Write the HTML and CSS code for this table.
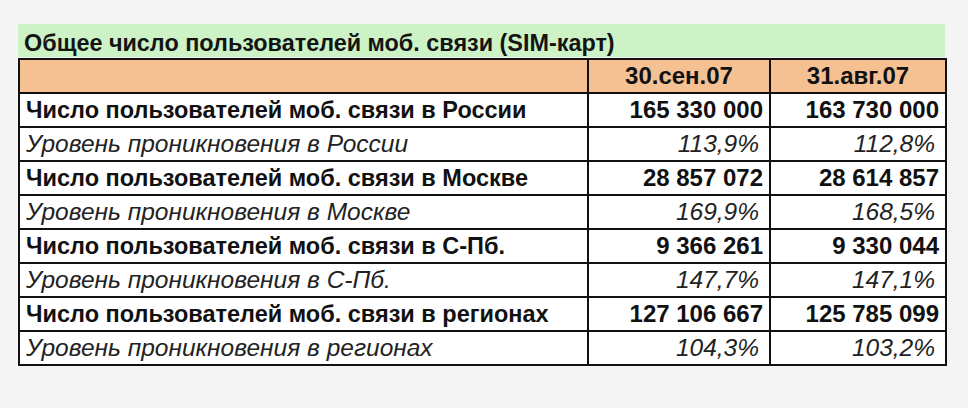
FILE: index.html
```html
<!DOCTYPE html>
<html lang="ru">
<head>
<meta charset="utf-8">
<link rel="stylesheet" href="styles.css">
</head>
<body>
<div class="sheet">
  <div class="title">Общее число пользователей моб. связи (SIM-карт)</div>
  <table class="data">
    <colgroup>
      <col class="c-label">
      <col class="c-num">
      <col class="c-num2">
    </colgroup>
    <tr class="head">
      <td></td>
      <td class="date">30.сен.07</td>
      <td class="date">31.авг.07</td>
    </tr>
    <tr class="total">
      <td class="label">Число пользователей моб. связи в России</td>
      <td class="num">165 330 000</td>
      <td class="num">163 730 000</td>
    </tr>
    <tr class="rate">
      <td class="label">Уровень проникновения в России</td>
      <td class="num">113,9%</td>
      <td class="num">112,8%</td>
    </tr>
    <tr class="total">
      <td class="label">Число пользователей моб. связи в Москве</td>
      <td class="num">28 857 072</td>
      <td class="num">28 614 857</td>
    </tr>
    <tr class="rate">
      <td class="label">Уровень проникновения в Москве</td>
      <td class="num">169,9%</td>
      <td class="num">168,5%</td>
    </tr>
    <tr class="total">
      <td class="label">Число пользователей моб. связи в С-Пб.</td>
      <td class="num">9 366 261</td>
      <td class="num">9 330 044</td>
    </tr>
    <tr class="rate">
      <td class="label">Уровень проникновения в С-Пб.</td>
      <td class="num">147,7%</td>
      <td class="num">147,1%</td>
    </tr>
    <tr class="total">
      <td class="label">Число пользователей моб. связи в регионах</td>
      <td class="num">127 106 667</td>
      <td class="num">125 785 099</td>
    </tr>
    <tr class="rate">
      <td class="label">Уровень проникновения в регионах</td>
      <td class="num">104,3%</td>
      <td class="num">103,2%</td>
    </tr>
  </table>
</div>
</body>
</html>
```

FILE: styles.css
```css
html, body {
  margin: 0;
  padding: 0;
  background: #f4f4f4;
}

body {
  width: 968px;
  height: 408px;
  overflow: hidden;
  font-family: "Liberation Sans", Arial, sans-serif;
  color: #111;
}

.sheet {
  padding: 24px 0 0 18px;
  width: 927px;
}

.title {
  height: 33px;
  background: #cdf2c6;
  font-weight: bold;
  font-size: 23.4px;
  line-height: 38px;
  padding-left: 6px;
  box-sizing: border-box;
  color: #141414;
  white-space: nowrap;
}

.data {
  border-collapse: collapse;
  width: 927px;
  table-layout: fixed;
  margin-top: 1px;
}

.c-label { width: 569px; }
.c-num { width: 182px; }
.c-num2 { width: 176px; }

.data td {
  border: 2px solid #111;
  height: 34px;
  padding: 0 6px;
  box-sizing: border-box;
  background: #fff;
  white-space: nowrap;
  line-height: 32px;
}

.head td {
  background: #f5c193;
}

.date {
  text-align: center;
  font-weight: bold;
  font-size: 24px;
}

.label {
  padding-left: 5px;
}

.total td {
  font-weight: bold;
  font-size: 23.5px;
}

.total td.num {
  font-size: 24px;
}

.rate td {
  font-style: italic;
  font-size: 24.5px;
  color: #222;
}

.rate td.num {
  padding-right: 10px;
}

.num {
  text-align: right;
}
```
